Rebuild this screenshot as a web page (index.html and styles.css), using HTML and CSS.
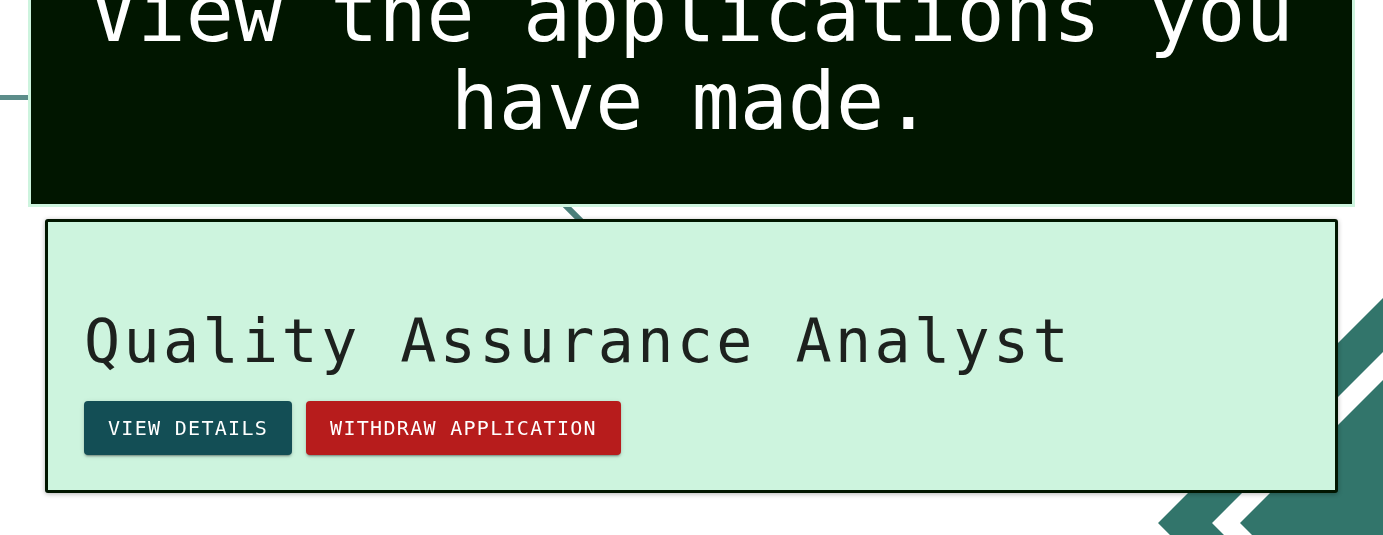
FILE: index.html
```html
<!DOCTYPE html>
<html lang="en">
<head>
<meta charset="utf-8">
<title>My Applications</title>
<link rel="stylesheet" href="styles.css">
</head>
<body>
<svg class="backdrop" viewBox="0 0 1383 535" preserveAspectRatio="none" aria-hidden="true">
  <rect x="0" y="95" width="200" height="5" fill="#5c8d8a"/>
  <line x1="450" y1="90" x2="700" y2="340" stroke="#4a7f7a" stroke-width="6"/>
  <polygon fill="#32756b" points="1383,298 1158,523 1383,748 1383,694 1212,523 1383,352"/>
  <polygon fill="#32756b" points="1383,380 1240,523 1383,666"/>
</svg>
<main class="page">
  <header class="hero">
    <h1 class="hero-title">View the applications you have made.</h1>
  </header>
  <section class="card">
    <h2 class="card-title">Quality Assurance Analyst</h2>
    <div class="actions">
      <button class="btn btn-primary" type="button">View Details</button>
      <button class="btn btn-danger" type="button">Withdraw Application</button>
    </div>
  </section>
</main>
</body>
</html>
```

FILE: styles.css
```css
html, body {
  margin: 0;
  padding: 0;
  height: 100%;
  overflow: hidden;
  background: #ffffff;
  font-family: "DejaVu Sans Mono", monospace;
}

.backdrop {
  position: fixed;
  left: 0;
  top: 0;
  width: 100%;
  height: 100%;
  z-index: 0;
}

.page {
  position: relative;
  z-index: 1;
  padding: 0 28px;
}

.hero {
  margin-top: -53px;
  padding: 20px 20px 58px;
  background: #011600;
  border: 3px solid #cdf4de;
  text-align: center;
}

.hero-title {
  margin: 0;
  color: #ffffff;
  font-family: "DejaVu Sans Mono", monospace;
  font-weight: 400;
  font-size: 80px;
  line-height: 88px;
}

.card {
  margin: 12px 17px 0;
  padding: 36px 36px 35px;
  background: #cdf4de;
  border: 3px solid #011600;
  border-radius: 3px;
  box-shadow: 0 1px 5px rgba(0, 0, 0, 0.3);
}

.card-title {
  margin: 47px 0 24px;
  color: #1d211e;
  font-family: "DejaVu Sans Mono", monospace;
  font-weight: 400;
  font-size: 60px;
  line-height: 72px;
  letter-spacing: 3.4px;
}

.actions {
  display: flex;
  gap: 14px;
}

.btn {
  margin: 0;
  padding: 9px 24px;
  border: 0;
  border-radius: 4px;
  color: #ffffff;
  font-family: "DejaVu Sans Mono", monospace;
  font-size: 20px;
  line-height: 36px;
  letter-spacing: 1.3px;
  text-transform: uppercase;
  cursor: pointer;
  box-shadow: 0 3px 1px -2px rgba(0, 0, 0, 0.2), 0 2px 2px 0 rgba(0, 0, 0, 0.14), 0 1px 5px 0 rgba(0, 0, 0, 0.12);
}

.btn-primary {
  background: #134e55;
}

.btn-danger {
  background: #b71c1c;
}
```
